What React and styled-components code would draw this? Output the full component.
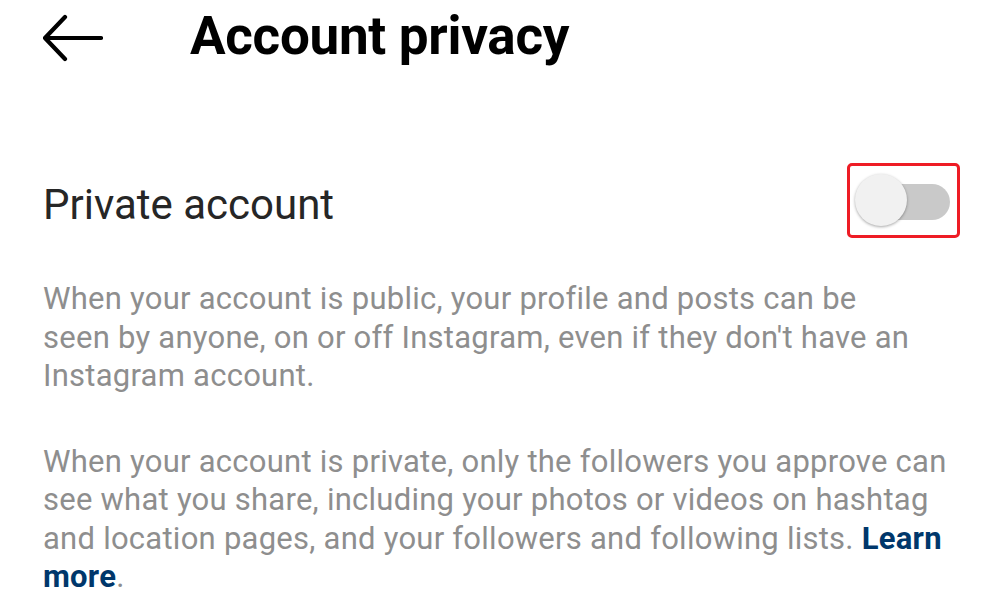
import styled, { createGlobalStyle } from 'styled-components';

const GlobalStyle = createGlobalStyle`
  html, body {
    margin: 0;
    padding: 0;
    background: #ffffff;
  }
  body {
    font-family: Roboto, "Liberation Sans", sans-serif;
  }
`;

const Screen = styled.div`
  width: 1006px;
  height: 600px;
  overflow: hidden;
  background: #fff;
  padding: 0 43px;
  box-sizing: border-box;
`;

const TopBar = styled.div`
  display: flex;
  align-items: center;
  height: 72px;
  gap: 87px;
`;

const BackButton = styled.button`
  border: 0;
  background: none;
  padding: 0;
  width: 60px;
  height: 48px;
  margin-top: 4px;
  display: flex;
  align-items: center;
  cursor: pointer;
`;

const Title = styled.h1`
  margin: 0;
  font-size: 53px;
  line-height: 60px;
  font-weight: 700;
  color: #000;
  letter-spacing: -0.3px;
`;

const SettingRow = styled.div`
  display: flex;
  align-items: center;
  justify-content: space-between;
  margin-top: 91px;
  height: 74px;
`;

const SettingLabel = styled.span`
  font-size: 42px;
  line-height: 50px;
  padding-top: 10px;
  color: #262626;
`;

const ToggleFrame = styled.div`
  width: 113px;
  height: 75px;
  box-sizing: border-box;
  border: 3px solid #ee1c25;
  border-radius: 5px;
  margin-right: 3px;
  display: flex;
  align-items: center;
  padding-left: 5px;
  position: relative;
`;

const Track = styled.div`
  position: absolute;
  left: 20px;
  right: 7px;
  top: 18px;
  height: 36px;
  border-radius: 18px;
  background: #c9c9c9;
`;

const Knob = styled.div`
  position: relative;
  width: 52px;
  height: 52px;
  border-radius: 50%;
  background: #f1f1f1;
  box-shadow: 0 1px 3px rgba(0, 0, 0, 0.35);
`;

const Description = styled.p`
  margin: ${(p) => p.$top}px 0 0;
  max-width: ${(p) => p.$width || 920}px;
  font-size: 31px;
  line-height: 38.5px;
  letter-spacing: 0.25px;
  color: #8e8e8e;
`;

const LearnMore = styled.a`
  color: #00376b;
  font-weight: 700;
  text-decoration: none;
`;

const Dot = styled.span`
  color: #8e8e8e;
`;

export default function App() {
  return (
    <>
      <GlobalStyle />
      <Screen>
        <TopBar>
          <BackButton aria-label="Back">
            <svg width="60" height="48" viewBox="0 0 60 48" fill="none">
              <path
                d="M58 24H3M22 3L2 24l20 21"
                stroke="#000"
                strokeWidth="4.2"
                strokeLinecap="round"
                strokeLinejoin="round"
              />
            </svg>
          </BackButton>
          <Title>Account privacy</Title>
        </TopBar>
        <SettingRow>
          <SettingLabel>Private account</SettingLabel>
          <ToggleFrame>
            <Track />
            <Knob />
          </ToggleFrame>
        </SettingRow>
        <Description $top={43} $width={876}>
          When your account is public, your profile and posts can be seen by
          anyone, on or off Instagram, even if they don't have an Instagram
          account.
        </Description>
        <Description $top={47}>
          When your account is private, only the followers you approve can see
          what you share, including your photos or videos on hashtag and
          location pages, and your followers and following lists.{' '}
          <LearnMore href="#">Learn more</LearnMore>
          <Dot>.</Dot>
        </Description>
      </Screen>
    </>
  );
}
